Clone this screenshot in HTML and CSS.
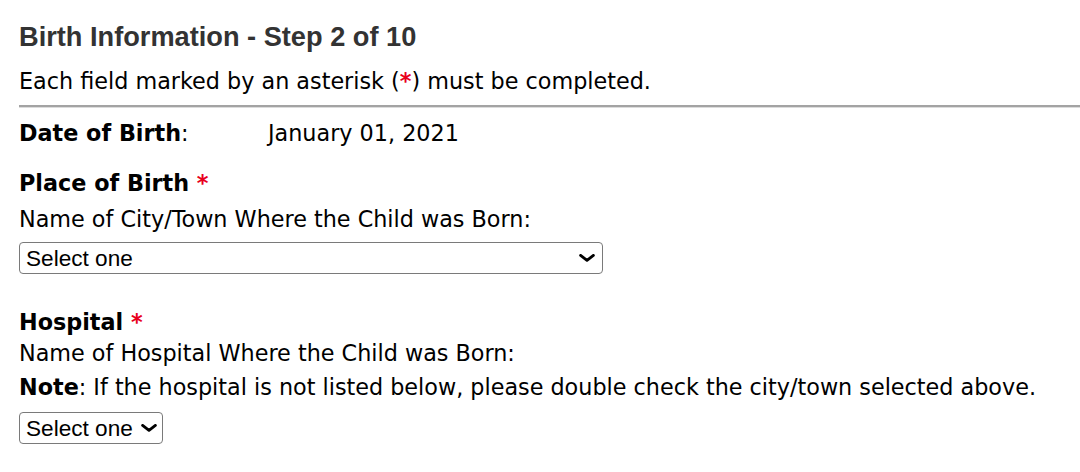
FILE: index.html
```html
<!DOCTYPE html>
<html>
<head>
<meta charset="utf-8">
<link rel="stylesheet" href="styles.css">
</head>
<body>
<div class="page">
  <h1 class="title">Birth Information - Step 2 of 10</h1>
  <p class="intro">Each field marked by an asterisk (<span class="req">*</span>) must be completed.</p>
  <hr class="rule">
  <div class="dob">
    <span class="dob-label"><b>Date of Birth</b>:</span>
    <span class="dob-value">January 01, 2021</span>
  </div>
  <div class="field field-place">
    <div class="field-title">Place of Birth <span class="req">*</span></div>
    <div class="field-desc">Name of City/Town Where the Child was Born:</div>
    <span class="selwrap sel-wide">
      <select class="sel"><option>Select one</option></select>
      <svg class="chev" viewBox="0 0 16 8" width="16" height="8"><path d="M1.6 1.4 L8 6.4 L14.4 1.4" fill="none" stroke="#000" stroke-width="2.8" stroke-linecap="round" stroke-linejoin="round"/></svg>
    </span>
  </div>
  <div class="field field-hosp">
    <div class="field-title">Hospital <span class="req">*</span></div>
    <div class="field-desc">Name of Hospital Where the Child was Born:</div>
    <div class="field-note"><b>Note</b>: If the hospital is not listed below, please double check the city/town selected above.</div>
    <span class="selwrap sel-small">
      <select class="sel"><option>Select one</option></select>
      <svg class="chev" viewBox="0 0 16 8" width="16" height="8"><path d="M1.6 1.4 L8 6.4 L14.4 1.4" fill="none" stroke="#000" stroke-width="2.8" stroke-linecap="round" stroke-linejoin="round"/></svg>
    </span>
  </div>
</div>
</body>
</html>
```
FILE: styles.css
```css
html, body { margin: 0; padding: 0; background: #fff; }
.page {
  padding: 0 0 0 19px;
  font-family: "DejaVu Sans", Verdana, sans-serif;
  font-size: 22.3px;
  color: #000;
}
.title {
  margin: 0;
  padding-top: 21px;
  font-family: "Liberation Sans", Arial, sans-serif;
  font-size: 27.2px;
  font-weight: bold;
  color: #333;
  line-height: 32px;
}
.intro { margin: 15px 0 0; line-height: 26px; }
.req { color: #e8001c; font-weight: bold; }
.rule {
  margin: 11px 0 0;
  border: 0;
  border-top: 2px solid #a3a3a3;
  border-bottom: 1px solid #dcdcdc;
  height: 0;
}
.dob { display: flex; margin-top: 12px; line-height: 26px; }
.dob-label { width: 249px; }
.field { display: flex; flex-direction: column; align-items: flex-start; }
.field-place { margin-top: 24px; }
.field-hosp { margin-top: 35px; }
.field-title { font-weight: bold; line-height: 26px; }
.field-desc { margin-top: 10px; line-height: 26px; }
.field-hosp .field-desc { margin-top: 5px; }
.field-note { margin-top: 8px; line-height: 26px; }
.selwrap { position: relative; display: block; margin-top: 10px; }
.field-hosp .selwrap { margin-top: 12px; }
.sel {
  display: block;
  width: 100%;
  -webkit-appearance: none;
  appearance: none;
  font-family: "Liberation Sans", Arial, sans-serif;
  font-size: 22.6px;
  height: 32px;
  border: 1px solid #7a7a7a;
  border-radius: 4px;
  background: #fff;
  color: #000;
  padding: 0 30px 0 6px;
  margin: 0;
}
.chev { position: absolute; right: 8px; top: 12px; pointer-events: none; }
.sel-wide { width: 584px; }
.sel-small { width: 144px; }
.sel-small .sel { padding-right: 20px; }
.sel-small .chev { right: 6px; }
```
